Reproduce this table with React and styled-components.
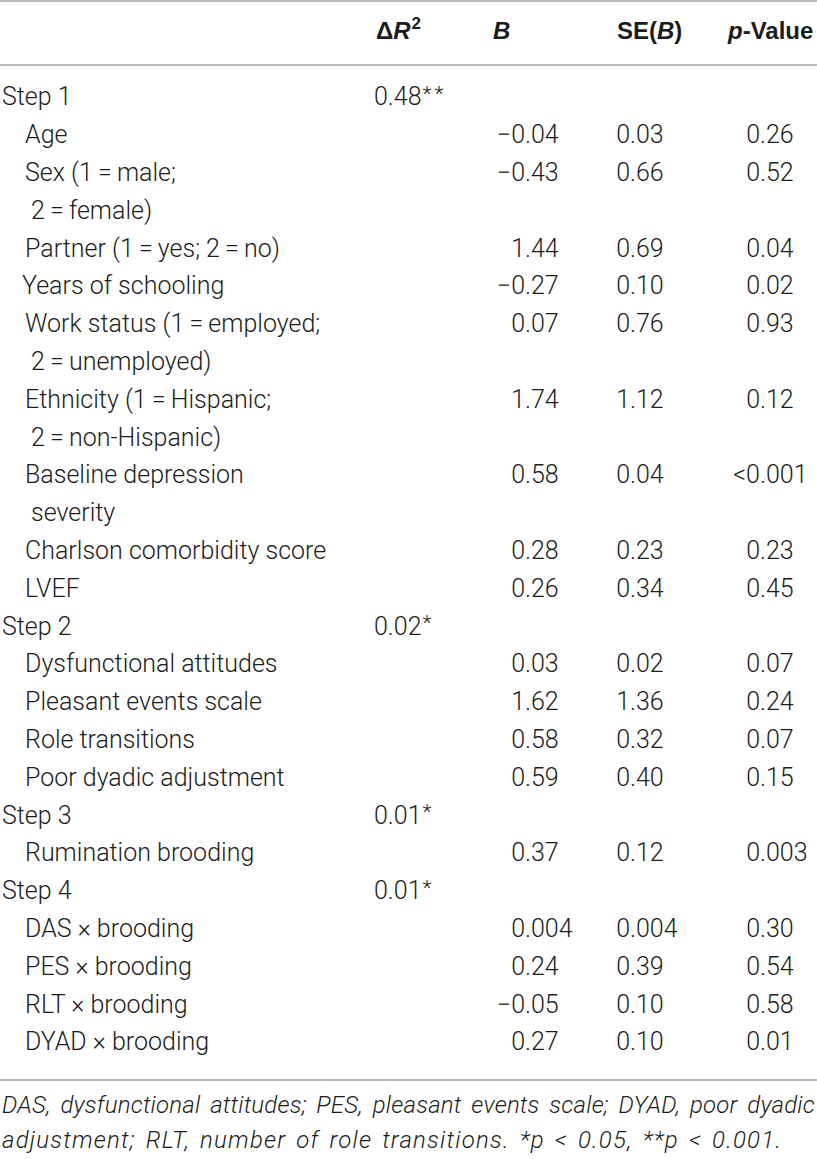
import React from "react";
import styled, { createGlobalStyle } from "styled-components";

const ms = "\u2212";
const eq = "\u2009=\u2009";

const rows = [
  { label: ["Step 1"], level: 0, r2: "0.48", star: "**" },
  { label: ["Age"], b: ms + "0.04", se: "0.03", p: "0.26" },
  { label: ["Sex (1" + eq + "male;", "2" + eq + "female)"], b: ms + "0.43", se: "0.66", p: "0.52" },
  { label: ["Partner (1" + eq + "yes; 2" + eq + "no)"], b: "1.44", se: "0.69", p: "0.04" },
  { label: ["Years of schooling"], indent: 22, b: ms + "0.27", se: "0.10", p: "0.02" },
  { label: ["Work status (1" + eq + "employed;", "2" + eq + "unemployed)"], b: "0.07", se: "0.76", p: "0.93" },
  { label: ["Ethnicity (1" + eq + "Hispanic;", "2" + eq + "non-Hispanic)"], b: "1.74", se: "1.12", p: "0.12" },
  { label: ["Baseline depression", "severity"], b: "0.58", se: "0.04", p: "<0.001" },
  { label: ["Charlson comorbidity score"], b: "0.28", se: "0.23", p: "0.23" },
  { label: ["LVEF"], b: "0.26", se: "0.34", p: "0.45" },
  { label: ["Step 2"], level: 0, r2: "0.02", star: "*" },
  { label: ["Dysfunctional attitudes"], b: "0.03", se: "0.02", p: "0.07" },
  { label: ["Pleasant events scale"], b: "1.62", se: "1.36", p: "0.24" },
  { label: ["Role transitions"], b: "0.58", se: "0.32", p: "0.07" },
  { label: ["Poor dyadic adjustment"], b: "0.59", se: "0.40", p: "0.15" },
  { label: ["Step 3"], level: 0, r2: "0.01", star: "*" },
  { label: ["Rumination brooding"], b: "0.37", se: "0.12", p: "0.003" },
  { label: ["Step 4"], level: 0, r2: "0.01", star: "*" },
  { label: ["DAS \u00d7 brooding"], b: "0.004", se: "0.004", p: "0.30" },
  { label: ["PES \u00d7 brooding"], b: "0.24", se: "0.39", p: "0.54" },
  { label: ["RLT \u00d7 brooding"], b: ms + "0.05", se: "0.10", p: "0.58" },
  { label: ["DYAD \u00d7 brooding"], b: "0.27", se: "0.10", p: "0.01" },
];

const Num = ({ value, intWidth }) => {
  if (!value) return <Cell />;
  const dot = value.indexOf(".");
  return (
    <Cell>
      <Line>
        <IntPart $w={intWidth}>{value.slice(0, dot)}</IntPart>
        {value.slice(dot)}
      </Line>
    </Cell>
  );
};

const App = () => {
  return (
    <>
      <GlobalStyle />
      <Page>
        <HeaderRow>
          <HeadCell />
          <HeadCell $pad={2}>
            {"\u0394"}
            <i>R</i>
            <Sup>2</Sup>
          </HeadCell>
          <HeadCell $pad={13}>
            <i>B</i>
          </HeadCell>
          <HeadCell $pad={22}>
            SE(<i>B</i>)
          </HeadCell>
          <HeadCell $pad={18}>
            <i>p</i>-Value
          </HeadCell>
        </HeaderRow>
        <Body>
          {rows.map((row, i) => (
            <Row key={i}>
              <Label $indent={row.level === 0 ? 2 : row.indent || 25}>
                {row.label.map((line, j) => (
                  <Line key={j} $cont={j > 0}>
                    {line}
                  </Line>
                ))}
              </Label>
              <Cell>
                {row.r2 && (
                  <Line>
                    {row.r2}
                    <Star>{row.star}</Star>
                  </Line>
                )}
              </Cell>
              <Num value={row.b} intWidth={45} />
              <Num value={row.se} intWidth={35} />
              <Num value={row.p} intWidth={50} />
            </Row>
          ))}
        </Body>
        <Note>
          <NoteLine $full $ls={0.2}>
            DAS, dysfunctional attitudes; PES, pleasant events scale; DYAD, poor
            dyadic
          </NoteLine>
          <NoteLine $ls={1.2} $ws={3}>
            adjustment; RLT, number of role transitions. *p &lt; 0.05, **p &lt;
            0.001.
          </NoteLine>
        </Note>
      </Page>
    </>
  );
};

export default App;

const GlobalStyle = createGlobalStyle`
  body {
    margin: 0;
    background: #ffffff;
  }
`;

const Page = styled.div`
  width: 817px;
  color: #1c1c1c;
  font-family: Roboto, "Liberation Sans", sans-serif;
  font-weight: 300;
  font-size: 25px;
`;

const Grid = styled.div`
  display: grid;
  grid-template-columns: 374px 106px 115px 115px 1fr;
`;

const HeaderRow = styled(Grid)`
  height: 66px;
  padding-bottom: 4px;
  box-sizing: border-box;
  align-items: center;
  border-top: 2px solid #b8b8b8;
  border-bottom: 2px solid #b8b8b8;
  font-family: "Liberation Sans", Arial, sans-serif;
  font-weight: 700;
  font-size: 24px;
`;

const HeadCell = styled.div`
  padding-left: ${(p) => p.$pad || 0}px;
  white-space: nowrap;
`;

const Sup = styled.sup`
  font-size: 17px;
  vertical-align: 10px;
  line-height: 0;
  margin-left: 1px;
`;

const Body = styled.div`
  padding: 12px 0 18px;
  border-bottom: 2px solid #b8b8b8;
`;

const Row = styled(Grid)``;

const Label = styled.div`
  padding-left: ${(p) => p.$indent}px;
`;

const Line = styled.div`
  display: flex;
  align-items: center;
  height: 37.8px;
  padding-left: ${(p) => (p.$cont ? 6 : 0)}px;
  white-space: nowrap;
`;

const Cell = styled.div`
  white-space: nowrap;
`;

const IntPart = styled.span`
  display: inline-block;
  width: ${(p) => p.$w}px;
  text-align: right;
`;

const Star = styled.span`
  font-size: 21px;
  letter-spacing: 3px;
  margin-left: 1px;
  position: relative;
  top: -3px;
`;

const Note = styled.div`
  margin-top: 7px;
  padding: 0 2px;
  font-style: italic;
  font-size: 24px;
  line-height: 35px;
`;

const NoteLine = styled.div`
  white-space: nowrap;
  letter-spacing: ${(p) => p.$ls}px;
  word-spacing: ${(p) => p.$ws || 0}px;
  text-align: ${(p) => (p.$full ? "justify" : "left")};
  text-align-last: ${(p) => (p.$full ? "justify" : "left")};
`;
